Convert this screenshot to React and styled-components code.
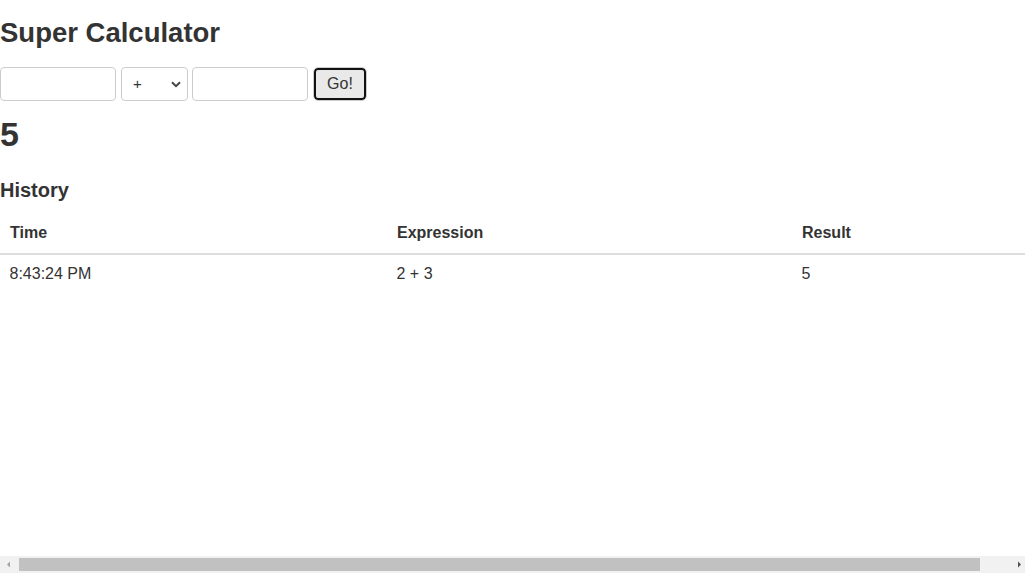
import React, { useState } from "react";
import styled, { createGlobalStyle } from "styled-components";

const GlobalStyle = createGlobalStyle`
  html, body {
    margin: 0;
    padding: 0;
    background: #fff;
  }
  body {
    font-family: "Liberation Sans", Arial, sans-serif;
    font-size: 16px;
    line-height: 1.42857;
    color: #333;
  }
`;

const Page = styled.main`
  display: flex;
  flex-direction: column;
`;

const Title = styled.h2`
  margin: 16px 0 0;
  font-size: 27.5px;
  line-height: 1.2;
  font-weight: 700;
`;

const Form = styled.form`
  display: flex;
  align-items: center;
  gap: 5px;
  margin-top: 18px;
  height: 34px;
`;

const NumberInput = styled.input`
  box-sizing: border-box;
  width: 116px;
  height: 34px;
  margin: 0;
  padding: 6px 10px;
  border: 1px solid #ccc;
  border-radius: 4px;
  font: inherit;
  color: #333;
  background: #fff;
  outline: none;
`;

const SelectWrap = styled.div`
  position: relative;
  width: 67px;
  height: 34px;
  margin-right: -1px;
`;

const Select = styled.select`
  box-sizing: border-box;
  appearance: none;
  width: 100%;
  height: 34px;
  margin: 0;
  padding: 0 0 0 11px;
  border: 1px solid #ccc;
  border-radius: 4px;
  font: inherit;
  font-size: 15px;
  color: #333;
  background: #fff;
  outline: none;
`;

const Chevron = styled.svg`
  position: absolute;
  right: 7px;
  top: 14px;
  width: 10px;
  height: 7px;
  pointer-events: none;
`;

const GoButton = styled.button`
  box-sizing: border-box;
  width: 54px;
  height: 34px;
  margin: 0;
  padding: 0;
  border: 1px solid #ccc;
  border-radius: 5px;
  background: #e9e9e9;
  box-shadow: inset 0 0 0 2px #111;
  font: inherit;
  color: #333;
  cursor: pointer;
`;

const Result = styled.h1`
  margin: 13px 0 0;
  font-size: 34px;
  line-height: 1.2;
  font-weight: 700;
`;

const SubTitle = styled.h4`
  margin: 23px 0 0;
  font-size: 20px;
  line-height: 1.2;
  font-weight: 700;
`;

const Table = styled.table`
  width: calc(100% + 30px);
  table-layout: fixed;
  margin-top: 12.5px;
  border-collapse: collapse;
  border-spacing: 0;
`;

const Th = styled.th`
  box-sizing: border-box;
  width: ${(p) => p.$w || "auto"};
  padding: 8px 8px 8px 10px;
  text-align: left;
  font-weight: 700;
  border-bottom: 2px solid #ddd;
`;

const Td = styled.td`
  padding: 8px 8px 8px 9.5px;
  text-align: left;
`;

/* horizontal scrollbar of the reference window */
const ScrollBar = styled.div`
  position: fixed;
  left: 0;
  right: 0;
  bottom: 0;
  height: 17px;
  display: flex;
  align-items: center;
  background: #f1f1f1;
`;

const Arrow = styled.svg`
  flex: none;
  width: 19px;
  height: 17px;
`;

const Track = styled.div`
  flex: 1;
  height: 13px;
  display: flex;
`;

const Thumb = styled.div`
  width: 961px;
  height: 100%;
  background: #c1c1c1;
`;

export default function App() {
  const [a, setA] = useState("");
  const [b, setB] = useState("");
  const [op, setOp] = useState("+");
  const history = [{ time: "8:43:24 PM", expr: "2 + 3", result: 5 }];

  return (
    <Page>
      <GlobalStyle />
      <Title>Super Calculator</Title>
      <Form onSubmit={(e) => e.preventDefault()}>
        <NumberInput value={a} onChange={(e) => setA(e.target.value)} />
        <SelectWrap>
          <Select value={op} onChange={(e) => setOp(e.target.value)}>
            <option value="+">+</option>
            <option value="-">-</option>
            <option value="*">*</option>
            <option value="/">/</option>
          </Select>
          <Chevron viewBox="0 0 10 7">
            <path d="M1 1.2 L5 5.2 L9 1.2" fill="none" stroke="#444" strokeWidth="2" />
          </Chevron>
        </SelectWrap>
        <NumberInput value={b} onChange={(e) => setB(e.target.value)} />
        <GoButton type="submit">Go!</GoButton>
      </Form>
      <Result>5</Result>
      <SubTitle>History</SubTitle>
      <Table>
        <thead>
          <tr>
            <Th $w="387px">Time</Th>
            <Th $w="405px">Expression</Th>
            <Th>Result</Th>
          </tr>
        </thead>
        <tbody>
          {history.map((h, i) => (
            <tr key={i}>
              <Td>{h.time}</Td>
              <Td>{h.expr}</Td>
              <Td>{h.result}</Td>
            </tr>
          ))}
        </tbody>
      </Table>
      <ScrollBar>
        <Arrow viewBox="0 0 19 17">
          <path d="M7 8.5 L10 5.5 L10 11.5 Z" fill="#a3a3a3" />
        </Arrow>
        <Track>
          <Thumb />
        </Track>
        <Arrow viewBox="0 0 19 17">
          <path d="M15 8.5 L12 5.5 L12 11.5 Z" fill="#505050" />
        </Arrow>
      </ScrollBar>
    </Page>
  );
}
